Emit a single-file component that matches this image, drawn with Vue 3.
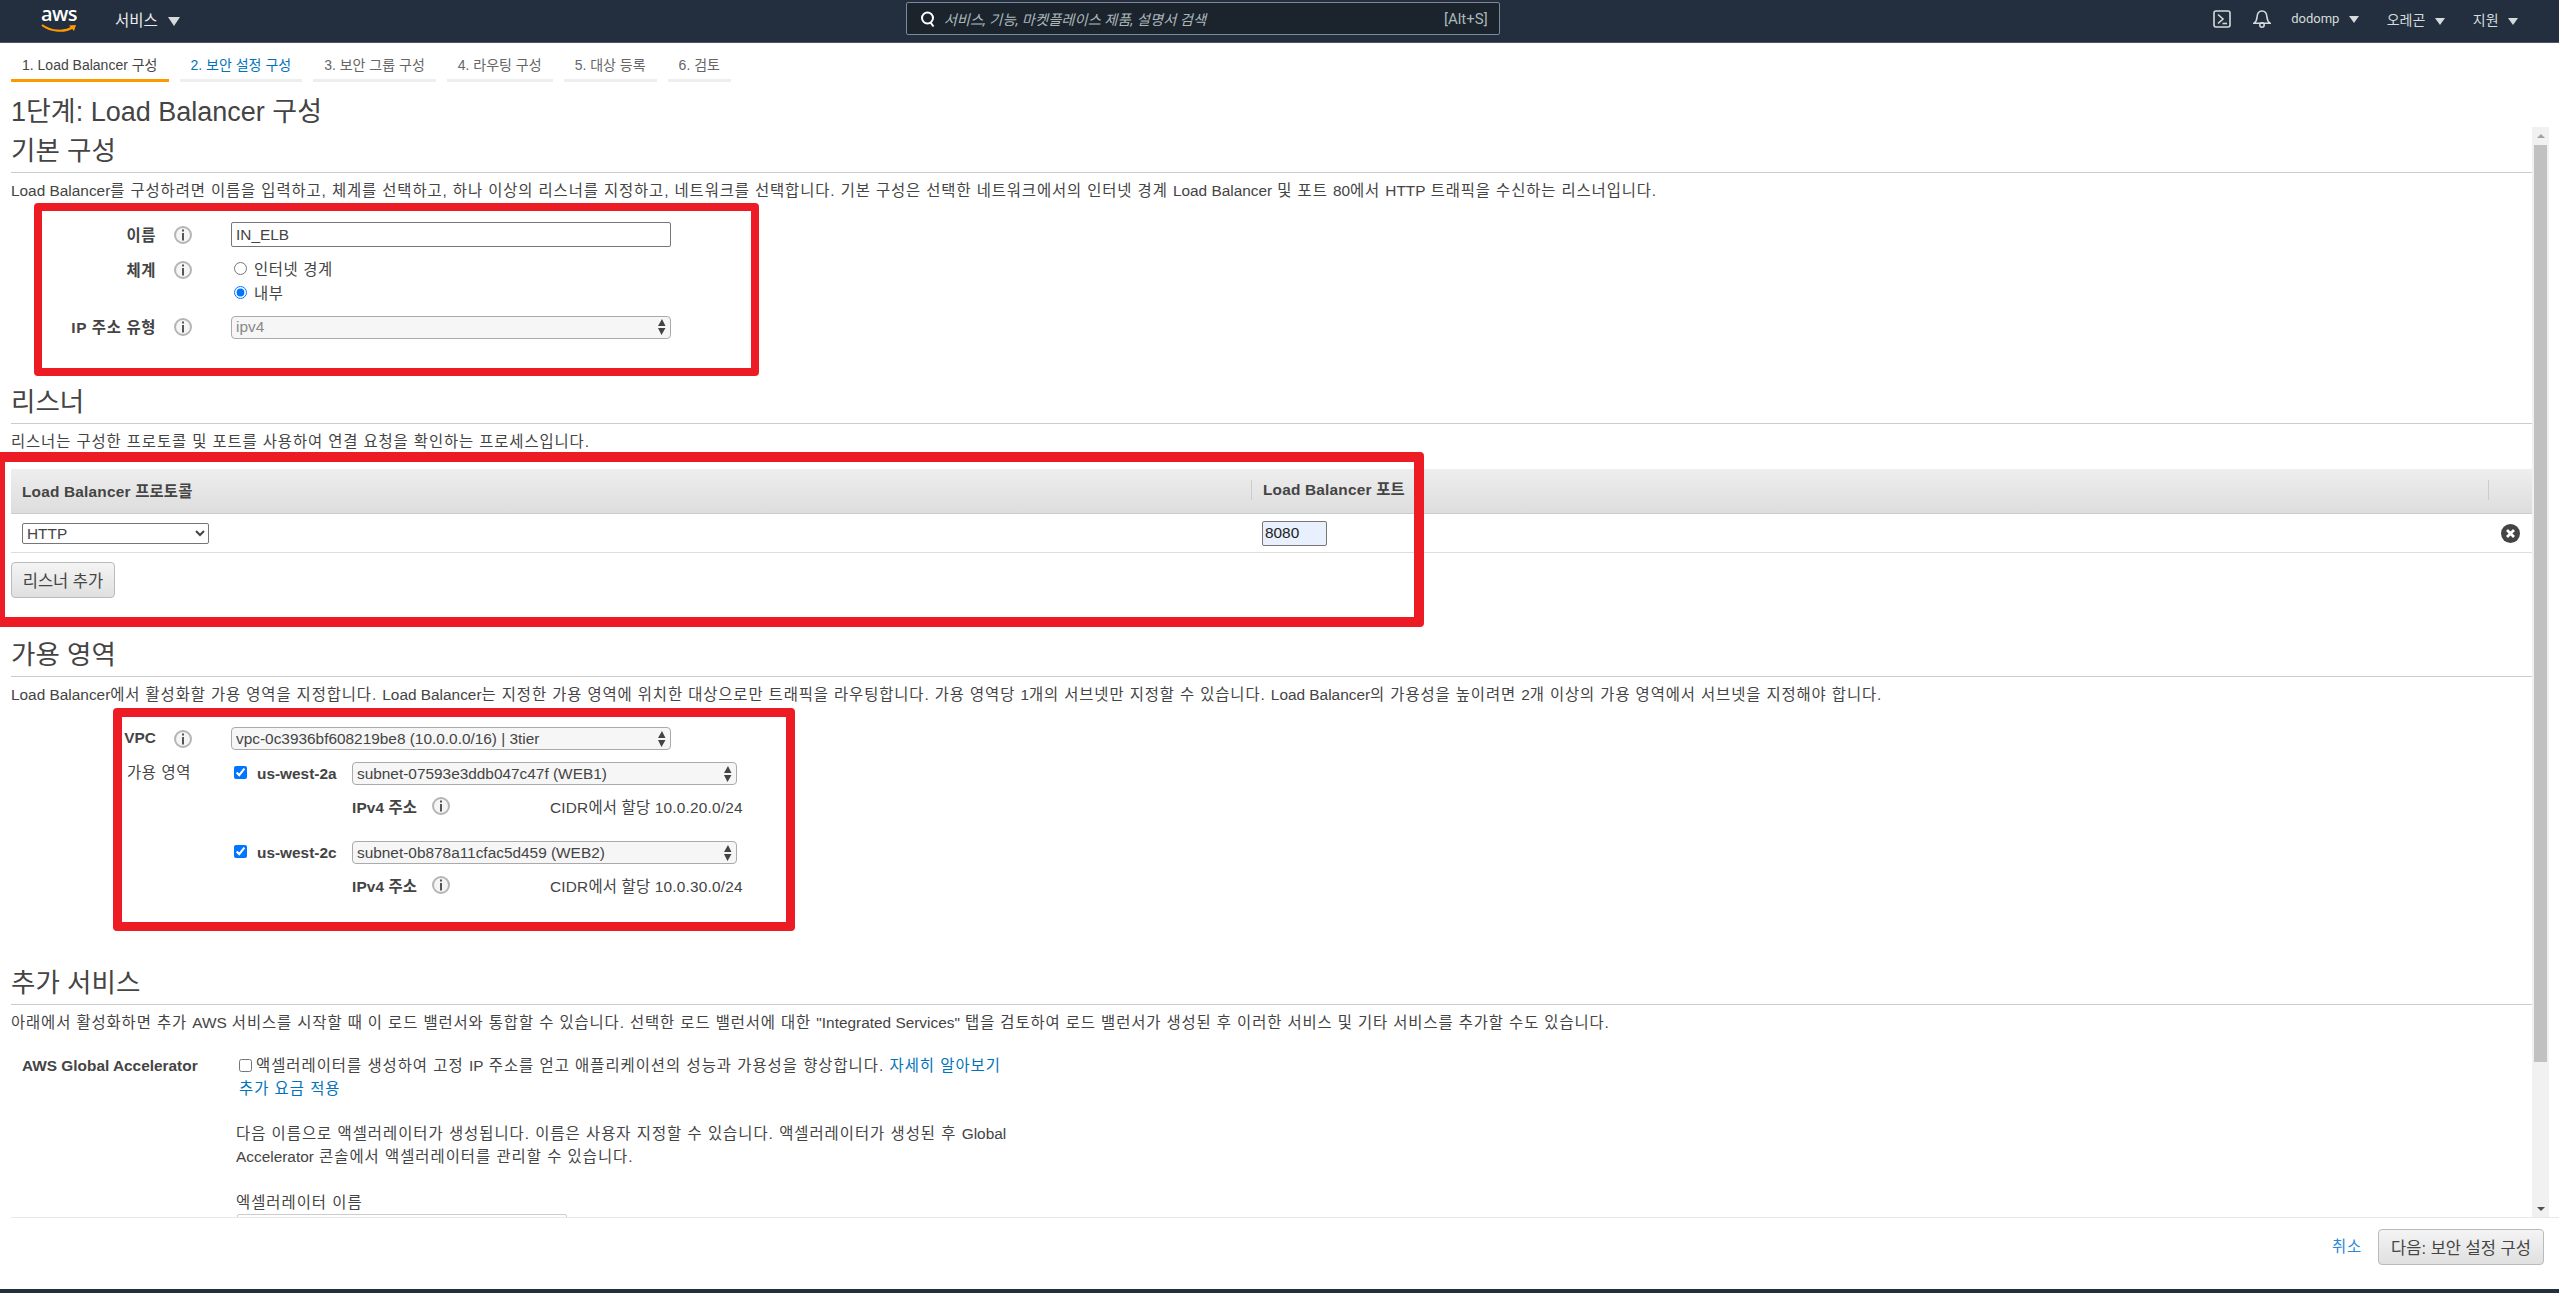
<script setup>
const tabs = [
  { label: '1. Load Balancer 구성', state: 'active' },
  { label: '2. 보안 설정 구성', state: 'next' },
  { label: '3. 보안 그룹 구성' },
  { label: '4. 라우팅 구성' },
  { label: '5. 대상 등록' },
  { label: '6. 검토' },
]

const zones = [
  { name: 'us-west-2a', subnet: 'subnet-07593e3ddb047c47f (WEB1)', cidr: 'CIDR에서 할당 10.0.20.0/24' },
  { name: 'us-west-2c', subnet: 'subnet-0b878a11cfac5d459 (WEB2)', cidr: 'CIDR에서 할당 10.0.30.0/24' },
]
</script>

<template>
  <div class="page">
    <svg class="defs">
      <symbol id="info" viewBox="0 0 18 18">
        <circle cx="9" cy="9" r="8" fill="#f5f5f5" stroke="#b5b5b5" stroke-width="2" />
        <path d="M9 3.500v2M9 7v7.500" stroke="#555" stroke-width="2" />
      </symbol>
      <symbol id="updown" viewBox="0 0 9 16">
        <path d="M5 0l3.500 7H1zM4.500 16L1 9h7.500z" fill="#444" />
      </symbol>
    </svg>

    <header class="nav">
      <div class="logo">
        <span class="logo-text">aws</span>
        <svg class="logo-smile" width="36" height="9" viewBox="0 0 36 9">
          <path d="M1 1C10 8 24 8.500 32 3" fill="none" stroke="#f90" stroke-width="2.200" />
          <path d="M28 1.500l7-.5-2 6z" fill="#f90" />
        </svg>
      </div>
      <span class="nav-item services">서비스 <i class="caret big"></i></span>
      <div class="search">
        <svg width="16" height="18" viewBox="0 0 16 18">
          <circle cx="7.5" cy="8" r="5.5" fill="none" stroke="#fff" stroke-width="2" />
          <path d="M10.5 12.5l3 4" stroke="#fff" stroke-width="2" />
        </svg>
        <span class="search-hint">서비스, 기능, 마켓플레이스 제품, 설명서 검색</span>
        <span class="search-key">[Alt+S]</span>
      </div>
      <div class="nav-right">
        <svg class="nav-icon" width="18" height="18" viewBox="0 0 18 18">
          <rect x="1" y="1" width="16" height="16" rx="2" fill="none" stroke="#d5dbdb" stroke-width="1.6" />
          <path d="M5 4.5L10 9l-5 4.5" fill="none" stroke="#d5dbdb" stroke-width="1.6" />
          <path d="M9.5 13.5H14" stroke="#d5dbdb" stroke-width="1.6" />
        </svg>
        <svg class="nav-icon bell" width="18" height="19" viewBox="0 0 18 19">
          <path d="M1 14.2c2.4-1.5 2.8-3.5 3-6C4.300 4 6 2 9 2s4.700 2 5 6.200c.2 2.500.6 4.500 3 6z" fill="none" stroke="#d5dbdb" stroke-width="1.6" />
          <circle cx="9" cy="16" r="2.200" fill="none" stroke="#d5dbdb" stroke-width="1.500" />
        </svg>
        <span class="nav-item user">dodomp <i class="caret"></i></span>
        <span class="nav-item region">오레곤 <i class="caret"></i></span>
        <span class="nav-item support">지원 <i class="caret"></i></span>
      </div>
    </header>

    <nav class="tabs">
      <a v-for="tab in tabs" :key="tab.label" class="tab" :class="tab.state">{{ tab.label }}</a>
    </nav>
    <h1 class="title">1단계: Load Balancer 구성</h1>

    <div class="body">
      <main class="scroller">
        <section class="section basic">
          <h2>기본 구성</h2>
          <p class="desc"><span class="en">Load Balancer</span>를 구성하려면 이름을 입력하고, 체계를 선택하고, 하나 이상의 리스너를 지정하고, 네트워크를 선택합니다. 기본 구성은 선택한 네트워크에서의 인터넷 경계 <span class="en">Load Balancer</span> 및 포트 <span class="en">80</span>에서 <span class="en">HTTP</span> 트래픽을 수신하는 리스너입니다.</p>
          <div class="form">
            <div class="form-row name-row">
              <label class="row-label">이름</label>
              <svg class="info"><use href="#info" /></svg>
              <input class="text-input" value="IN_ELB" />
            </div>
            <div class="form-row scheme-row">
              <label class="row-label">체계</label>
              <svg class="info"><use href="#info" /></svg>
              <div class="radios">
                <label><input type="radio" name="scheme" /> 인터넷 경계</label>
                <label><input type="radio" name="scheme" checked /> 내부</label>
              </div>
            </div>
            <div class="form-row">
              <label class="row-label">IP 주소 유형</label>
              <svg class="info"><use href="#info" /></svg>
              <div class="fake-select disabled">
                <span>ipv4</span>
                <svg class="updown"><use href="#updown" /></svg>
              </div>
            </div>
          </div>
          <div class="mark mark-basic"></div>
        </section>

        <section class="section listeners">
          <h2>리스너</h2>
          <p class="desc">리스너는 구성한 프로토콜 및 포트를 사용하여 연결 요청을 확인하는 프로세스입니다.</p>
          <div class="listener-table">
            <div class="table-head">
              <div class="col-protocol">Load Balancer 프로토콜</div>
              <div class="col-port">Load Balancer 포트</div>
              <div class="col-action"></div>
            </div>
            <div class="table-row">
              <div class="col-protocol">
                <select class="native-select"><option>HTTP</option></select>
              </div>
              <div class="col-port"><input class="port-input" value="8080" /></div>
              <div class="col-action">
                <svg width="19" height="19" viewBox="0 0 19 19">
                  <circle cx="9.500" cy="9.500" r="9.500" fill="#444" />
                  <path d="M6 6l7 7M13 6l-7 7" stroke="#fff" stroke-width="2.800" />
                </svg>
              </div>
            </div>
          </div>
          <button class="btn add-btn">리스너 추가</button>
          <div class="mark mark-listeners"></div>
        </section>

        <section class="section zones">
          <h2>가용 영역</h2>
          <p class="desc"><span class="en">Load Balancer</span>에서 활성화할 가용 영역을 지정합니다. <span class="en">Load Balancer</span>는 지정한 가용 영역에 위치한 대상으로만 트래픽을 라우팅합니다. 가용 영역당 <span class="en">1</span>개의 서브넷만 지정할 수 있습니다. <span class="en">Load Balancer</span>의 가용성을 높이려면 <span class="en">2</span>개 이상의 가용 영역에서 서브넷을 지정해야 합니다.</p>
          <div class="form">
            <div class="form-row">
              <label class="row-label vpc-label">VPC</label>
              <svg class="info"><use href="#info" /></svg>
              <div class="fake-select">
                <span>vpc-0c3936bf608219be8 (10.0.0.0/16) | 3tier</span>
                <svg class="updown"><use href="#updown" /></svg>
              </div>
            </div>
            <div class="az-block">
              <span class="az-label">가용 영역</span>
              <div class="az-list">
                <div v-for="zone in zones" :key="zone.name" class="az">
                  <div class="az-head">
                    <input type="checkbox" checked />
                    <span class="az-name">{{ zone.name }}</span>
                    <div class="fake-select subnet">
                      <span>{{ zone.subnet }}</span>
                      <svg class="updown"><use href="#updown" /></svg>
                    </div>
                  </div>
                  <div class="az-ip">
                    <span class="az-ip-label">IPv4 주소</span>
                    <svg class="info"><use href="#info" /></svg>
                    <span class="az-cidr">{{ zone.cidr }}</span>
                  </div>
                </div>
              </div>
            </div>
          </div>
          <div class="mark mark-zones"></div>
        </section>

        <section class="section extras">
          <h2>추가 서비스</h2>
          <p class="desc">아래에서 활성화하면 추가 <span class="en">AWS</span> 서비스를 시작할 때 이 로드 밸런서와 통합할 수 있습니다. 선택한 로드 밸런서에 대한 <span class="en">"Integrated Services"</span> 탭을 검토하여 로드 밸런서가 생성된 후 이러한 서비스 및 기타 서비스를 추가할 수도 있습니다.</p>
          <div class="accel">
            <div class="accel-label">AWS Global Accelerator</div>
            <div class="accel-body">
              <div class="accel-check">
                <input type="checkbox" />
                <span>액셀러레이터를 생성하여 고정 <span class="en">IP</span> 주소를 얻고 애플리케이션의 성능과 가용성을 향상합니다. <a>자세히 알아보기</a></span>
              </div>
              <a class="accel-price">추가 요금 적용</a>
              <p class="accel-note">다음 이름으로 액셀러레이터가 생성됩니다. 이름은 사용자 지정할 수 있습니다. 액셀러레이터가 생성된 후 <span class="en">Global Accelerator</span> 콘솔에서 액셀러레이터를 관리할 수 있습니다.</p>
              <div class="accel-name">엑셀러레이터 이름</div>
              <input class="accel-input" />
            </div>
          </div>
        </section>
      </main>

      <div class="scrollbar">
        <i class="arrow up"></i>
        <div class="thumb"></div>
        <i class="arrow down"></i>
      </div>
    </div>

    <footer class="footer">
      <a class="cancel">취소</a>
      <button class="btn next-btn">다음: 보안 설정 구성</button>
    </footer>
    <div class="bottom-bar"></div>
  </div>
</template>

<style>
html, body {
  margin: 0;
  background: #fff;
}
</style>

<style scoped>
.page {
  display: flex;
  flex-direction: column;
  width: 2559px;
  height: 1293px;
  overflow: hidden;
  font-family: "Liberation Sans", "Noto Sans CJK KR", sans-serif;
  font-size: 15.4px;
  letter-spacing: 0.9px;
  color: #444;
}
a { color: #0073bb; }
.defs { display: none; }
.en { letter-spacing: 0; }

/* top bar */
.nav {
  display: flex;
  align-items: center;
  flex: none;
  box-sizing: border-box;
  height: 43px;
  padding-bottom: 5px;
  border-bottom: 1px solid #4b5563;
  background: #232f3e;
  font-family: Roboto, "Noto Sans CJK KR", sans-serif;
  font-size: 13px;
  letter-spacing: 0;
  color: #d5dbdb;
}
.logo {
  display: flex;
  flex-direction: column;
  align-items: center;
  width: 36px;
  margin-left: 41px;
}
.logo-text {
  height: 18px;
  font-family: "Open Sans", sans-serif;
  font-size: 20px;
  font-weight: 600;
  line-height: 18px;
  letter-spacing: -0.5px;
  color: #fff;
}
.logo-smile { margin-top: 1px; }
.nav-item { white-space: nowrap; }
.services {
  margin-left: 38px;
  font-size: 15.5px;
  color: #eaeded;
}
.caret {
  display: inline-block;
  margin-left: 6px;
  border-top: 7px solid #d5dbdb;
  border-left: 5px solid transparent;
  border-right: 5px solid transparent;
}
.caret.big {
  border-top-width: 9px;
  border-left-width: 6px;
  border-right-width: 6px;
}
.search {
  display: flex;
  align-items: center;
  box-sizing: border-box;
  width: 594px;
  height: 33px;
  margin-left: 726px;
  padding: 0 11px 0 13px;
  border: 1px solid #7d8998;
  border-radius: 2px;
  background: #1b232d;
}
.search-hint {
  margin-left: 8px;
  font-size: 14.3px;
  font-style: italic;
  color: #aab7b8;
}
.search-key {
  margin-left: auto;
  font-size: 15px;
  color: #aab7b8;
}
.nav-right {
  display: flex;
  align-items: center;
  margin-left: auto;
  padding-right: 41px;
}
.bell { margin-left: 22px; }
.user { margin-left: 20px; }
.region,
.support { font-size: 14px; }
.region { margin-left: 28px; }
.support { margin-left: 28px; }

/* wizard tabs */
.tabs {
  display: flex;
  flex: none;
  gap: 11px;
  height: 39px;
  padding-left: 11px;
}
.tab {
  box-sizing: border-box;
  height: 39px;
  padding: 11px 11px 0;
  border-bottom: 3px solid #eee;
  color: #666;
  font-size: 14px;
  letter-spacing: 0;
  white-space: nowrap;
}
.tab.active {
  border-bottom-color: #f90;
  color: #444;
}
.tab.next { color: #0073bb; }

.title {
  flex: none;
  height: 45px;
  margin: 0;
  padding-left: 11px;
  font-size: 27px;
  font-weight: 400;
  line-height: 60px;
  letter-spacing: 0;
}

/* scrolling part */
.body {
  display: flex;
  flex: none;
  height: 1090px;
  padding-right: 10px;
}
.scroller {
  flex: 1;
  min-width: 0;
  padding-left: 11px;
  overflow: hidden;
}
.section { position: relative; }
.basic { height: 251px; }
.listeners { height: 253px; }
.zones { height: 328px; }
h2 {
  box-sizing: border-box;
  height: 46px;
  margin: 0;
  border-bottom: 1px solid #ccc;
  font-size: 26.5px;
  font-weight: 400;
  line-height: 49px;
  letter-spacing: 0;
}
.desc {
  height: 23px;
  margin: 6px 0 0;
  line-height: 24px;
  white-space: nowrap;
}

/* red annotation frames over the form */
.mark {
  position: absolute;
  box-sizing: border-box;
  border: 9px solid #ed1c24;
  border-radius: 4px;
  pointer-events: none;
}
.mark-basic { top: 76px; left: 23px; width: 725px; height: 173px; border-width: 8px; }
.mark-listeners { top: 74px; left: -16px; width: 1429px; height: 175px; border-width: 10px; }
.mark-zones { top: 77px; left: 102px; width: 682px; height: 223px; }

/* label / info / control rows */
.form { padding-top: 20px; }
.zones .form { padding-top: 21px; }
.form-row {
  display: flex;
  align-items: center;
}
.name-row { height: 25px; }
.scheme-row {
  align-items: flex-start;
  height: 47px;
  margin: 11px 0 10px;
}
.scheme-row .info { margin-top: 3px; }
.row-label {
  flex: none;
  width: 145px;
  padding-bottom: 2px;
  font-weight: 700;
  letter-spacing: 0.65px;
  text-align: right;
  white-space: nowrap;
}
.vpc-label { letter-spacing: 0; }
.info {
  flex: none;
  width: 18px;
  height: 18px;
  margin-left: 18px;
}
.form-row > .info { margin-right: 39px; }
.text-input {
  box-sizing: border-box;
  width: 440px;
  height: 25px;
  padding: 0 4px;
  border: 1px solid #767676;
  border-radius: 2px;
  font: inherit;
  letter-spacing: 0;
  color: #444;
}
.radios {
  display: flex;
  flex-direction: column;
  gap: 5px;
  margin-top: 2px;
  line-height: 19px;
  letter-spacing: 0.65px;
}
.radios input {
  margin: 0 2px 0 3px;
  accent-color: #0075ff;
}
.fake-select {
  display: flex;
  align-items: center;
  justify-content: space-between;
  box-sizing: border-box;
  width: 440px;
  height: 23px;
  padding: 0 4px;
  border: 1px solid #aaa;
  border-radius: 4px;
  background: #f6f6f6;
  letter-spacing: 0;
  white-space: nowrap;
}
.fake-select.disabled { color: #888; }
.updown {
  flex: none;
  width: 9px;
  height: 16px;
}

/* listener table */
.listener-table { margin-top: 16px; }
.table-head {
  display: flex;
  align-items: center;
  box-sizing: border-box;
  height: 45px;
  padding-bottom: 3px;
  border-bottom: 1px solid #ccc;
  background: linear-gradient(#eee, #ddd);
  font-weight: 700;
  letter-spacing: 0.2px;
}
.table-row {
  display: flex;
  align-items: center;
  box-sizing: border-box;
  height: 39px;
  border-bottom: 1px solid #ddd;
}
.col-protocol {
  box-sizing: border-box;
  width: 1240px;
  padding-left: 11px;
}
.col-port {
  flex: 1;
  box-sizing: border-box;
  height: 24px;
  padding-left: 11px;
  line-height: 24px;
}
.table-head .col-port { border-left: 1px solid #ccc; height: 20px; line-height: 20px; }
.table-row .col-port { height: 25px; }
.col-action {
  display: flex;
  align-items: center;
  box-sizing: border-box;
  width: 44px;
  height: 20px;
  padding-left: 13px;
}
.table-head .col-action { border-left: 1px solid #ccc; }
.native-select {
  display: block;
  width: 187px;
  height: 21px;
  padding: 0;
  border-radius: 2px;
  font: inherit;
  letter-spacing: 0;
  color: #444;
  background: #fff;
}
.port-input {
  display: block;
  box-sizing: border-box;
  width: 65px;
  height: 25px;
  padding: 0 2px;
  border: 1px solid #767676;
  border-radius: 2px;
  background: #e8f0fe;
  font: inherit;
  letter-spacing: 0;
  color: #222;
}
.btn {
  border: 1px solid #bbb;
  border-radius: 4px;
  background: linear-gradient(#f4f4f4, #e0e0e0);
  font: inherit;
  font-size: 16.5px;
  color: #444;
  white-space: nowrap;
}
.add-btn {
  display: block;
  width: 104px;
  height: 36px;
  margin-top: 9px;
  padding: 0;
}

/* availability zones */
.az-block {
  display: flex;
  margin-top: 12px;
  padding-left: 116px;
}
.az-label {
  flex: none;
  width: 104px;
  line-height: 22px;
  letter-spacing: 0.65px;
}
.az {
  height: 79px;
}
.az-head {
  display: flex;
  align-items: center;
}
.az-head input {
  flex: none;
  width: 13px;
  height: 13px;
  margin: 0 10px 3px 3px;
}
.az-name {
  flex: none;
  width: 95px;
  font-weight: 700;
  letter-spacing: 0;
}
.subnet { width: 385px; }
.az-ip {
  display: flex;
  align-items: center;
  height: 23px;
  margin-top: 9px;
  padding-left: 121px;
}
.az-ip-label {
  flex: none;
  width: 66px;
  font-weight: 700;
  letter-spacing: 0.1px;
  white-space: nowrap;
}
.az-ip .info {
  margin-left: 14px;
}
.az-cidr {
  margin-left: 100px;
  letter-spacing: 0.2px;
  white-space: nowrap;
}

/* global accelerator */
.accel {
  display: flex;
  margin-top: 20px;
  line-height: 23px;
  letter-spacing: 1px;
}
.accel-label {
  flex: none;
  box-sizing: border-box;
  width: 225px;
  padding-left: 11px;
  font-weight: 700;
  letter-spacing: 0;
}
.accel-body {
  width: 776px;
}
.accel-check {
  display: flex;
  align-items: center;
  white-space: nowrap;
}
.accel-check input {
  margin: 0 4px 0 3px;
}
.accel-price {
  display: block;
  margin-left: 3px;
}
.accel-note {
  margin: 22px 0 0;
}
.accel-name { margin-top: 23px; }
.accel-input {
  box-sizing: border-box;
  width: 330px;
  height: 25px;
  margin: 0 0 0 1px;
  border: 1px solid #ccc;
  border-radius: 2px;
}

/* scrollbar */
.scrollbar {
  display: flex;
  flex: none;
  flex-direction: column;
  align-items: center;
  width: 17px;
  background: #f1f1f1;
}
.arrow {
  flex: none;
  margin: 7px 0;
  border-left: 4px solid transparent;
  border-right: 4px solid transparent;
}
.arrow.up { border-bottom: 4px solid #a3a3a3; height: 0; }
.arrow.down { margin-top: auto; margin-bottom: 6px; border-top: 4px solid #505050; }
.thumb {
  width: 13px;
  height: 917px;
  background: #c1c1c1;
}

/* footer */
.footer {
  display: flex;
  flex: none;
  align-items: flex-start;
  justify-content: flex-end;
  gap: 16px;
  box-sizing: border-box;
  height: 72px;
  margin-left: 11px;
  padding: 11px 15px 0 0;
  border-top: 1px solid #e8e8e8;
}
.cancel {
  color: #2b88d8;
  line-height: 36px;
}
.next-btn {
  width: 166px;
  height: 36px;
  padding: 0;
}
.bottom-bar {
  flex: none;
  height: 4px;
  background: #232f3e;
}
</style>
